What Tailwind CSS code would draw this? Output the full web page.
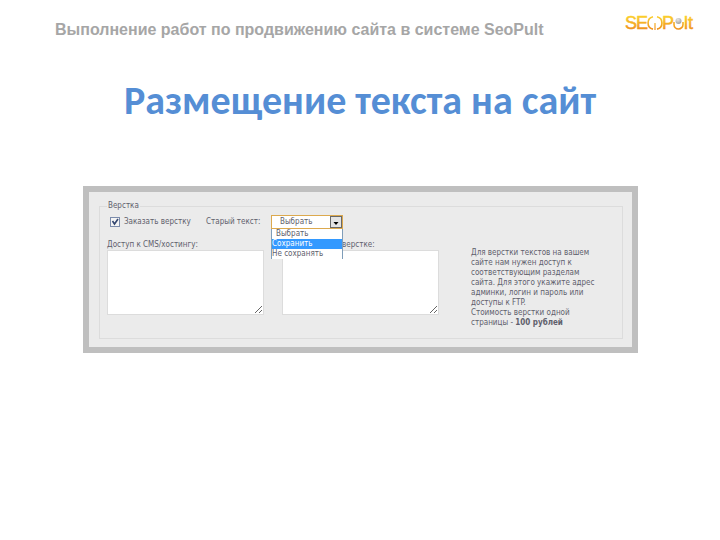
<!DOCTYPE html>
<html lang="ru">
<head>
    <meta charset="UTF-8">
    <meta name="viewport" content="width=device-width, initial-scale=1.0">
    <title>Размещение текста на сайт</title>
    <script src="https://cdn.jsdelivr.net/npm/@tailwindcss/browser@4"></script>
</head>
<body class="min-h-screen bg-white font-['Liberation_Sans',Arial,sans-serif]">
    <header class="flex items-start justify-between pl-[55px] pr-6 pt-3">
        <p class="pt-2 text-[16px] leading-5 font-bold text-[#a6a6a6]">Выполнение работ по продвижению сайта в системе SeoPult</p>
        <svg class="h-6 w-[72px] shrink-0" viewBox="0 0 72 24" role="img" aria-label="SEOPult">
            <defs>
                <linearGradient id="gold" x1="0" y1="4" x2="0" y2="19" gradientUnits="userSpaceOnUse">
                    <stop offset="0" stop-color="#fbd02c" />
                    <stop offset="1" stop-color="#ee8a1c" />
                </linearGradient>
                <radialGradient id="ball" cx="0.4" cy="0.3" r="0.7">
                    <stop offset="0" stop-color="#e6e6e6" />
                    <stop offset="1" stop-color="#a3a3a3" />
                </radialGradient>
            </defs>
            <g fill="url(#gold)" stroke="url(#gold)" stroke-width="0.5" font-family="Liberation Sans, Arial, sans-serif" font-size="18">
                <text x="1" y="17">S</text>
                <text x="12" y="17">E</text>
                <text x="38" y="17">P</text>
                <text x="60" y="17">l</text>
                <text x="64" y="17">t</text>
            </g>
            <g fill="none" stroke="url(#gold)" stroke-width="1.6">
                <path d="M29 4.800A6.300 6.300 0 0 0 29 17.100M33 4.800A6.300 6.300 0 0 1 33 17.100" />
                <path d="M31 11V18" stroke-width="1.2" />
                <path d="M50 10V12.500A4.500 4.500 0 0 0 59 12.500V10" />
            </g>
            <circle cx="54.500" cy="9" r="3" fill="url(#ball)" />
        </svg>
    </header>

    <main>
        <h1 class="pt-[35px] text-center font-['Carlito','Lato',sans-serif] text-[40px] leading-[52px] font-bold text-[#558ed5]">Размещение текста на сайт</h1>

        <form class="mr-[82px] ml-[83px] mt-[59px] border-6 border-[#bfbfbf] bg-[#ebebeb] px-[9px] pt-[9px] pb-2 pl-[10px] font-['DejaVu_Sans_Condensed','DejaVu_Sans',sans-serif] text-[8px] leading-[10px] text-[#60606c]">
            <fieldset class="border border-[#dcdcdc] px-[7px] pb-[10px]">
                <legend class="px-px">Верстка</legend>
                <div class="flex h-[19px] items-end">
                    <label class="flex h-4 w-[99px] items-center gap-1 pl-[3px]">
                        <input type="checkbox" checked class="sr-only">
                        <svg class="size-[10px] shrink-0" viewBox="0 0 10 10" aria-hidden="true">
                            <rect x="0.500" y="0.500" width="9" height="9" fill="#f4f4f4" stroke="#7b8bab" />
                            <path d="M2.500 4L4.500 7L8 2" fill="none" stroke="#34466f" stroke-width="1.600" />
                        </svg>
                        Заказать верстку
                    </label>
                    <label for="old-text" class="flex h-4 w-[65px] items-center">Старый текст:</label>
                    <div class="relative h-[15px] w-[72px]">
                        <select id="old-text" class="block h-[14px] w-full appearance-none border border-[#dca94e] bg-white pl-2 leading-[12px] outline-none">
                            <option>Выбрать</option>
                            <option>Сохранить</option>
                            <option>Не сохранять</option>
                        </select>
                        <svg class="pointer-events-none absolute top-px right-px h-3 w-3" viewBox="0 0 12 12" aria-hidden="true">
                            <rect x="0.500" y="0.500" width="11" height="11" fill="#e4e4e4" stroke="#686868" />
                            <path d="M3.500 6H8.500L6 9Z" fill="#000" />
                        </svg>
                        <ul class="absolute top-[14px] left-0 z-10 w-full border-x border-[#7f9db9] bg-white">
                            <li class="h-[10px] pl-1">Выбрать</li>
                            <li class="h-[10px] bg-[#3399ff] text-white">Сохранить</li>
                            <li class="h-[10px] whitespace-nowrap">Не сохранять</li>
                        </ul>
                    </div>
                </div>
                <div class="flex items-start gap-[18px] pt-[10px]">
                    <div class="w-[157px]">
                        <label for="access" class="block">Доступ к CMS/хостингу:</label>
                        <textarea id="access" class="block h-[65px] w-full border border-[#dcdcdc] bg-white"></textarea>
                    </div>
                    <div class="w-[157px]">
                        <label for="wishes" class="block pl-[60px]">верстке:</label>
                        <textarea id="wishes" class="block h-[65px] w-full border border-[#dcdcdc] bg-white"></textarea>
                    </div>
                    <p class="flex-1 pt-2 pl-[14px]">
                        Для верстки текстов на вашем<br>
                        сайте нам нужен доступ к<br>
                        соответствующим разделам<br>
                        сайта. Для этого укажите адрес<br>
                        админки, логин и пароль или<br>
                        доступы к FTP.<br>
                        Стоимость верстки одной<br>
                        страницы - <b>100 рублей</b>
                    </p>
                </div>
            </fieldset>
        </form>
    </main>
</body>
</html>
